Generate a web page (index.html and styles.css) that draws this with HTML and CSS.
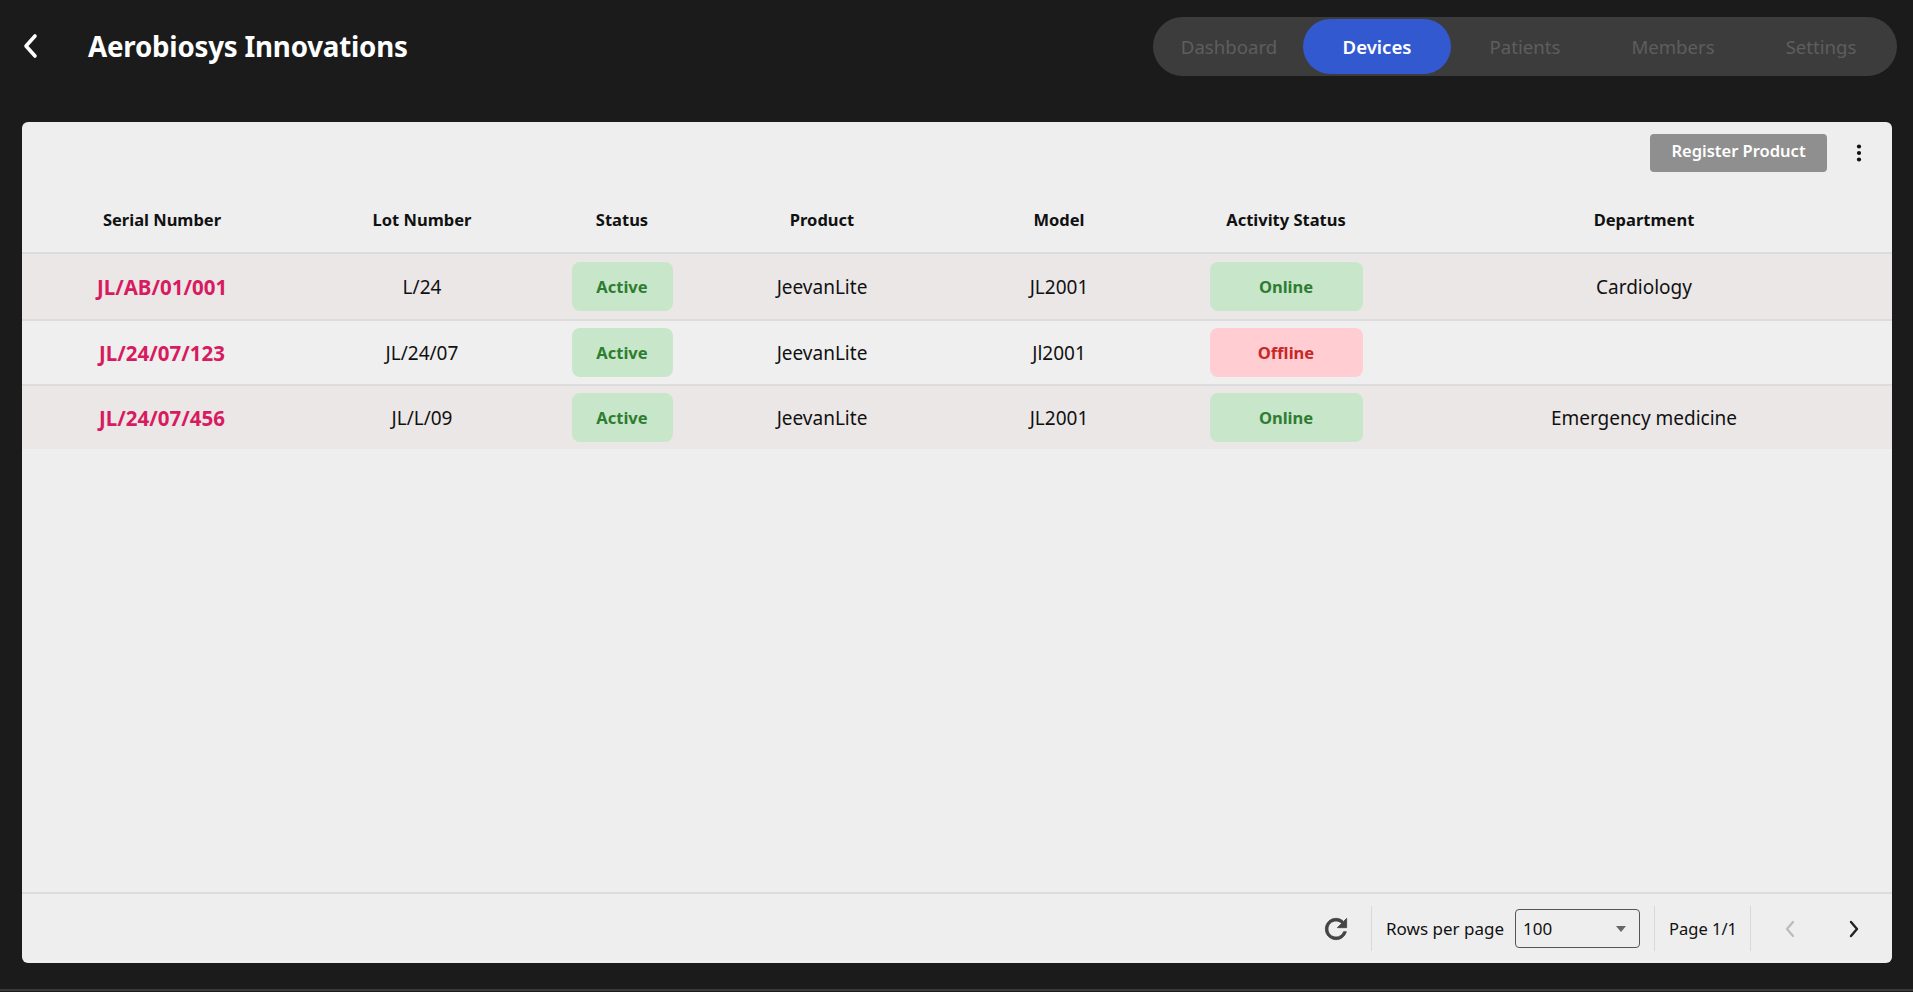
FILE: index.html
```html
<!DOCTYPE html>
<html>
<head>
<meta charset="utf-8">
<link rel="stylesheet" href="styles.css">
</head>
<body>
<div class="page">
  <header class="topbar">
    <div class="brand">
      <button class="back" aria-label="Back">
        <svg width="18" height="26" viewBox="0 0 18 26"><path d="M13 3 L4 13 L13 23" fill="none" stroke="#fff" stroke-width="3.6" stroke-linecap="round" stroke-linejoin="round"/></svg>
      </button>
      <h1 class="title">Aerobiosys Innovations</h1>
    </div>
    <nav class="tabs">
      <a class="tab">Dashboard</a>
      <a class="tab active">Devices</a>
      <a class="tab">Patients</a>
      <a class="tab">Members</a>
      <a class="tab">Settings</a>
    </nav>
  </header>

  <main class="card">
    <div class="toolbar">
      <button class="register">Register Product</button>
      <button class="kebab" aria-label="More">
        <svg width="24" height="24" viewBox="0 0 24 24"><circle cx="12" cy="5.5" r="2.1" fill="#111"/><circle cx="12" cy="12" r="2.1" fill="#111"/><circle cx="12" cy="18.5" r="2.1" fill="#111"/></svg>
      </button>
    </div>
    <div class="table">
      <div class="row head">
        <div class="c c1">Serial Number</div>
        <div class="c c2">Lot Number</div>
        <div class="c c3">Status</div>
        <div class="c c4">Product</div>
        <div class="c c5">Model</div>
        <div class="c c6">Activity Status</div>
        <div class="c c7">Department</div>
      </div>
      <div class="row odd">
        <div class="c c1 serial">JL/AB/01/001</div>
        <div class="c c2">L/24</div>
        <div class="c c3"><span class="badge status ok">Active</span></div>
        <div class="c c4">JeevanLite</div>
        <div class="c c5">JL2001</div>
        <div class="c c6"><span class="badge act ok">Online</span></div>
        <div class="c c7">Cardiology</div>
      </div>
      <div class="row even">
        <div class="c c1 serial">JL/24/07/123</div>
        <div class="c c2">JL/24/07</div>
        <div class="c c3"><span class="badge status ok">Active</span></div>
        <div class="c c4">JeevanLite</div>
        <div class="c c5">Jl2001</div>
        <div class="c c6"><span class="badge act bad">Offline</span></div>
        <div class="c c7"></div>
      </div>
      <div class="row odd">
        <div class="c c1 serial">JL/24/07/456</div>
        <div class="c c2">JL/L/09</div>
        <div class="c c3"><span class="badge status ok">Active</span></div>
        <div class="c c4">JeevanLite</div>
        <div class="c c5">JL2001</div>
        <div class="c c6"><span class="badge act ok">Online</span></div>
        <div class="c c7">Emergency medicine</div>
      </div>
    </div>
    <footer class="pager">
      <button class="icon-btn refresh" aria-label="Refresh">
        <svg width="32" height="32" viewBox="0 0 24 24"><path fill="#444" stroke="#444" stroke-width="0.6" d="M17.65 6.35C16.2 4.9 14.21 4 12 4c-4.42 0-7.99 3.58-7.99 8s3.57 8 7.99 8c3.73 0 6.84-2.55 7.730-6h-2.08c-.82 2.33-3.04 4-5.65 4-3.31 0-6-2.69-6-6s2.69-6 6-6c1.66 0 3.14.69 4.22 1.78L13 11h7V4l-2.35 2.35z"/></svg>
      </button>
      <span class="divider"></span>
      <span class="label">Rows per page</span>
      <div class="select">
        <span>100</span>
        <svg width="12" height="8" viewBox="0 0 12 8"><path d="M1 1 L11 1 L6 7 Z" fill="#666"/></svg>
      </div>
      <span class="divider"></span>
      <span class="label page-no">Page 1/1</span>
      <span class="divider"></span>
      <button class="icon-btn prev" aria-label="Previous">
        <svg width="14" height="20" viewBox="0 0 14 20"><path d="M10 3 L4 10 L10 17" fill="none" stroke="#bbb" stroke-width="2.2" stroke-linecap="round" stroke-linejoin="round"/></svg>
      </button>
      <button class="icon-btn next" aria-label="Next">
        <svg width="14" height="20" viewBox="0 0 14 20"><path d="M4 3 L10 10 L4 17" fill="none" stroke="#222" stroke-width="2.4" stroke-linecap="round" stroke-linejoin="round"/></svg>
      </button>
    </footer>
  </main>
  <div class="bottom-line"></div>
</div>
</body>
</html>
```
FILE: styles.css
```css
* { box-sizing: border-box; }
html, body { margin: 0; padding: 0; }
body {
  background: #1b1b1b;
  font-family: "Noto Sans", "Open Sans", sans-serif;
  height: 992px;
  overflow: hidden;
}
button { font-family: inherit; border: 0; background: none; padding: 0; cursor: pointer; }
.page {
  display: flex;
  flex-direction: column;
  height: 992px;
  padding: 0 21px 0 22px;
}
.topbar {
  height: 94px;
  display: flex;
  align-items: center;
  justify-content: space-between;
  flex: none;
}
.brand { display: flex; align-items: center; margin-top: -2px; }
.back {
  width: 26px; height: 40px;
  display: flex; align-items: center; justify-content: center;
  margin-left: -4px;
}
.title {
  margin: 0 0 0 44px;
  color: #fff;
  font-size: 27.7px;
  font-weight: 700;
  letter-spacing: -0.2px;
}
.tabs {
  display: flex;
  background: #3c3c3c;
  border-radius: 30px;
  padding: 2px;
  margin-top: -2px;
  margin-right: -5px;
  height: 59px;
}
.tab {
  width: 148px;
  display: flex; align-items: center; justify-content: center;
  color: #5e5e5e;
  font-size: 18.6px;
  border-radius: 28px;
}
.tab.active {
  background: #3359d1;
  color: #fff;
  font-weight: 600;
}
.card {
  margin-top: 28px;
  background: #eeeeee;
  border-radius: 6px;
  height: 841px;
  display: flex;
  flex-direction: column;
  flex: none;
}
.toolbar {
  height: 64px;
  display: flex;
  justify-content: flex-end;
  align-items: flex-start;
  padding: 12px 21px 0 0;
  gap: 20px;
}
.register {
  height: 38px;
  width: 177px;
  background: #8f8f8f;
  color: #fff;
  border-radius: 4px;
  font-size: 16.5px;
  font-weight: 600;
  line-height: 1;
  padding-bottom: 3px;
}
.kebab { width: 24px; height: 38px; display: flex; align-items: center; justify-content: center; }
.table { flex: 1; }
.row { display: flex; height: 65px; align-items: center; }
.row.head { height: 68px; border-bottom: 2px solid #dcdcdc; color: #111; }
.row.odd { background: #ebe7e7; }
.row.even { background: #efefef; }
.row + .row:not(.head) { border-top: 2px solid #dcdcdc; }
.row.odd:nth-child(2) { border-top: 0; }
.c { text-align: center; font-size: 19px; color: #111; display: flex; justify-content: center; align-items: center; }
.row.head .c { font-size: 16.5px; font-weight: 700; }
.c1 { width: 280px; }
.c2 { width: 240px; }
.c3 { width: 160px; }
.c4 { width: 240px; }
.c5 { width: 234px; }
.c6 { width: 220px; }
.c7 { flex: 1; }
.serial { color: #d81b60; font-weight: 700; font-size: 20.5px; }
.badge {
  height: 49px;
  border-radius: 8px;
  display: flex; align-items: center; justify-content: center;
  font-weight: 700;
  font-size: 16.5px;
}
.badge.status { width: 101px; }
.badge.act { width: 153px; }
.badge.ok { background: #c8e6c9; color: #2e7d32; }
.badge.bad { background: #ffcdd2; color: #c62828; }
.pager {
  height: 71px;
  border-top: 2px solid #dcdcdc;
  display: flex;
  justify-content: flex-end;
  align-items: center;
  padding-right: 14px;
}
.icon-btn { width: 48px; height: 44px; display: flex; align-items: center; justify-content: center; }
.refresh { width: 40px; margin-right: 15px; }
.divider { width: 1px; height: 45px; background: #d8d8d8; }
.label { font-size: 17px; color: #111; margin: 0 11px 0 14px; }
.select {
  width: 125px; height: 39px;
  border: 1.5px solid #555;
  border-radius: 4px;
  display: flex; align-items: center; justify-content: space-between;
  padding: 0 12px 0 7px;
  font-size: 17px; color: #111;
  margin-right: 14px;
}
.label.page-no { margin: 0 13px 0 14px; font-size: 16.5px; }
.prev { margin-left: 15px; margin-right: 16px; }
.bottom-line { margin: 26px -21px 0 -22px; height: 2px; background: #3a3a3a; }
```
